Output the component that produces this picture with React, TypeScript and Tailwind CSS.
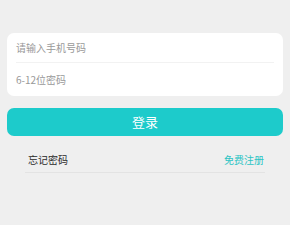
export default function App() {
  return (
    <div
      className="w-[290px] h-[225px] bg-[#efefef] px-[7px] pt-[33px]"
      style={{ fontFamily: "'Noto Sans CJK SC', 'Liberation Sans', sans-serif" }}
    >
      <div className="bg-white rounded-[7px] px-[9px]">
        <div className="h-[30px] flex items-center border-b border-[#f2f2f2] text-[10px] text-[#999999]">
          请输入手机号码
        </div>
        <div className="h-[33px] flex items-center text-[10px] text-[#999999]">
          6-12位密码
        </div>
      </div>
      <button className="mt-[12px] w-full h-[28px] rounded-[7px] bg-[#1dcbcb] text-white text-[13px] flex items-center justify-center">
        登录
      </button>
      <div className="mx-[18px] mt-[11px] h-[26px] flex items-center justify-between border-b border-[#e3e3e3] pl-[3px] pr-[1px] text-[10px]">
        <span className="text-[#2a2a2a]">忘记密码</span>
        <span className="text-[#2cc4c4]">免费注册</span>
      </div>
    </div>
  );
}
